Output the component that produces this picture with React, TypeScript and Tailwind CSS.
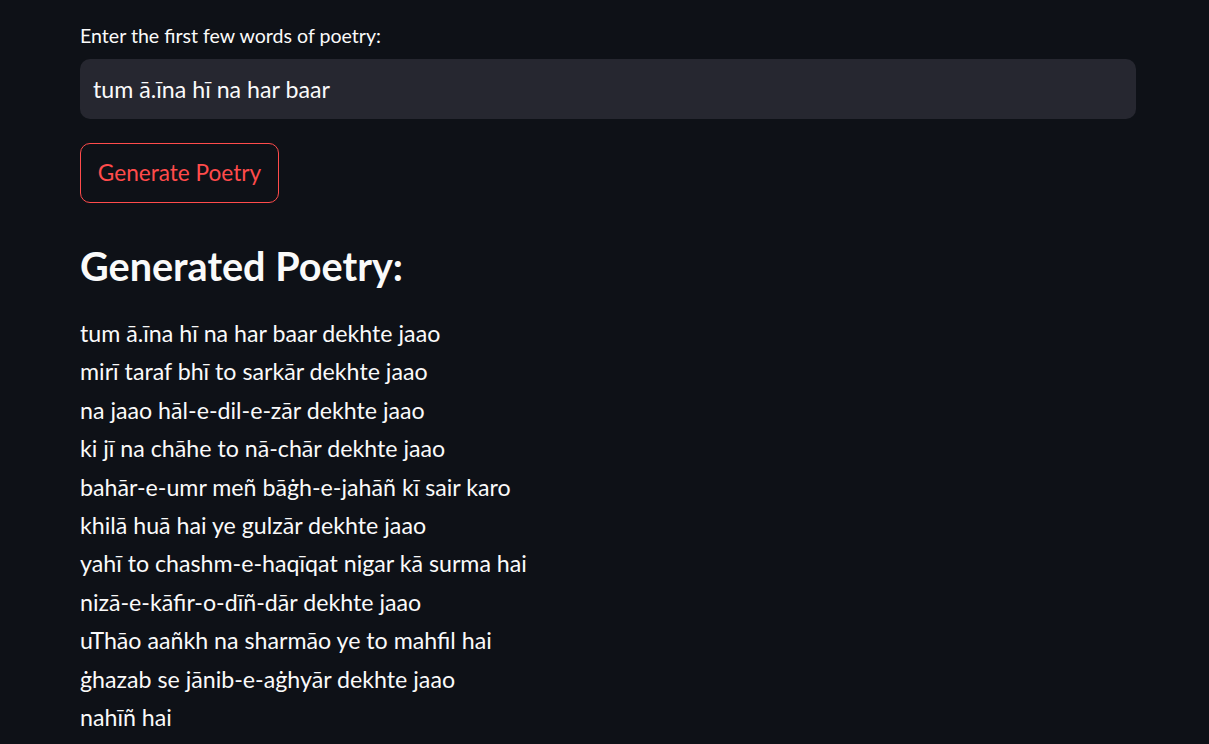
const LINES = [
  "tum ā.īna hī na har baar dekhte jaao",
  "mirī taraf bhī to sarkār dekhte jaao",
  "na jaao hāl-e-dil-e-zār dekhte jaao",
  "ki jī na chāhe to nā-chār dekhte jaao",
  "bahār-e-umr meñ bāġh-e-jahāñ kī sair karo",
  "khilā huā hai ye gulzār dekhte jaao",
  "yahī to chashm-e-haqīqat nigar kā surma hai",
  "nizā-e-kāfir-o-dīñ-dār dekhte jaao",
  "uThāo aañkh na sharmāo ye to mahfil hai",
  "ġhazab se jānib-e-aġhyār dekhte jaao",
  "nahīñ hai",
];

export default function App() {
  return (
    <div className="h-[744px] w-full overflow-hidden bg-[#0e1117] px-[80px] pt-[24px] font-['Lato','Noto_Sans',sans-serif] text-[#fafafa]">
      <div className="w-[1056px]">
        <label className="block h-[24px] text-[19.6px] leading-[24px]">
          Enter the first few words of poetry:
        </label>
        <div className="mt-[11px] flex h-[60px] items-center rounded-[10px] bg-[#262730] px-[13px] text-[23.2px]">
          tum ā.īna hī na har baar
        </div>
        <button className="mt-[24px] flex h-[60px] w-[199px] items-center justify-center rounded-[10px] border border-[#ff4b4b] text-[22.6px] text-[#ff4b4b]">
          Generate Poetry
        </button>
        <h2 className="mt-[38px] h-[50px] text-[39.6px] font-bold leading-[50px]">Generated Poetry:</h2>
        <div className="mt-[23px] text-[23.2px]">
          {LINES.map((line) => (
            <p key={line} className="h-[38.4px] leading-[38.4px]">
              {line}
            </p>
          ))}
        </div>
      </div>
    </div>
  );
}
